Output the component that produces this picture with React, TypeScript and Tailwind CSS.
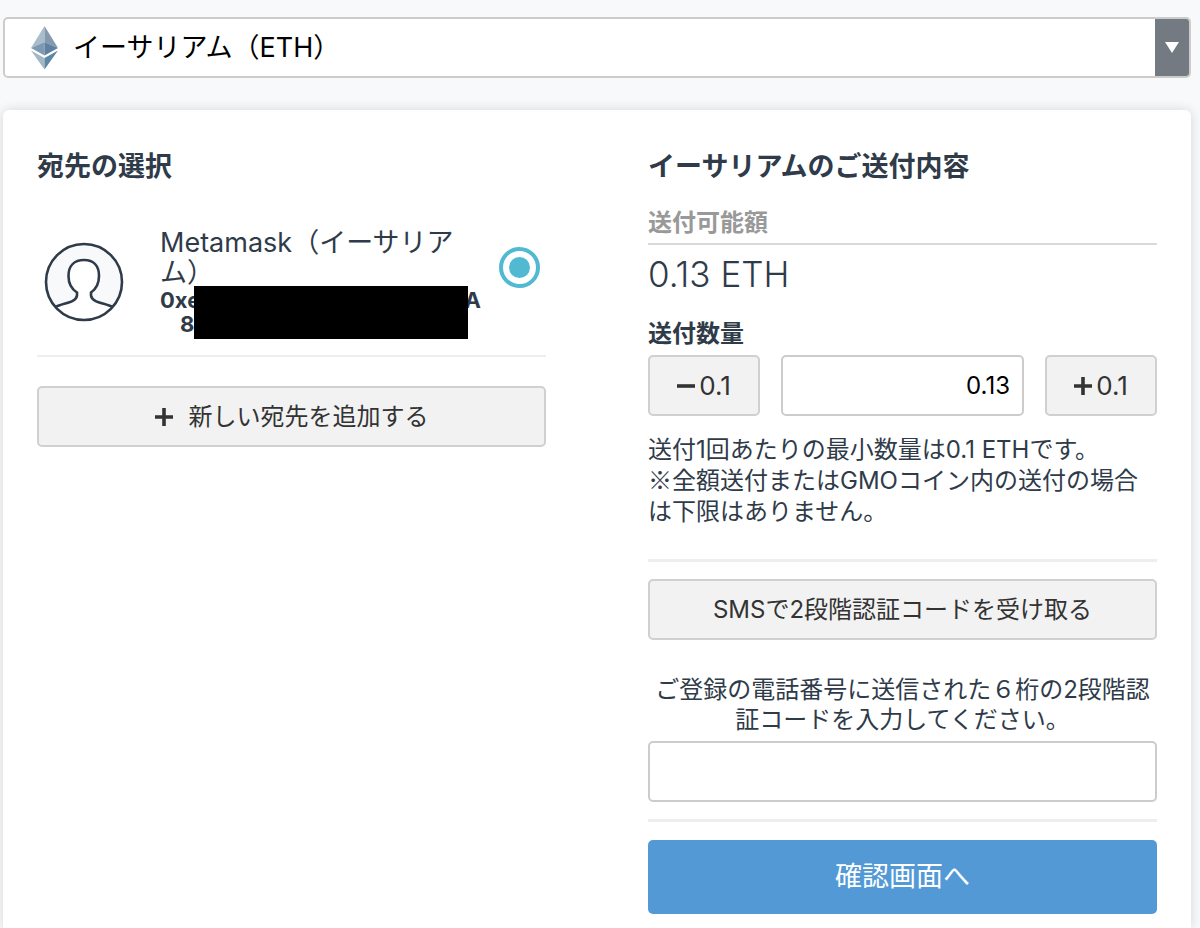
import { useState } from "react";

const GRAY_BTN =
  "flex h-[61px] items-center justify-center rounded-[5px] border-2 border-[#d0d0d0] bg-[#f2f2f2] text-[#333]";
const TEXT_INPUT =
  "h-[61px] w-full min-w-0 rounded-[5px] border-2 border-[#ccc] bg-white px-3 text-[24px] text-black outline-none";

function EthIcon() {
  return (
    <svg className="h-[43px] w-[27px] shrink-0" viewBox="0 0 27 43" aria-hidden="true">
      <path d="M13.5 0L0 22L13.5 16Z" fill="#a9bcc9" />
      <path d="M13.5 0L27 22L13.5 16Z" fill="#8299ae" />
      <path d="M0 22L13.5 16V29.500Z" fill="#7e99b2" />
      <path d="M27 22L13.5 16V29.500Z" fill="#5f819f" />
      <path d="M0 24.500L13.5 32V43.500Z" fill="#a3b7c5" />
      <path d="M27 24.500L13.5 32V43.500Z" fill="#5d87a3" />
    </svg>
  );
}

function AvatarIcon() {
  return (
    <svg className="size-20 shrink-0" viewBox="0 0 80 80" fill="none" stroke="#2f3b49" strokeWidth="2.6" aria-hidden="true">
      <circle cx="40" cy="40" r="38" fill="#f8f9fb" stroke="none" />
      <path
        d="M11.500 65C19 61 32 61 33 53.500V50.500C27.500 47 24.500 41 24.500 34C24.500 23.500 30.500 18 40 18C49.500 18 55 23.500 55 34C55 41 52 47 47 50.500V53.500C48 61 61 61 68.500 65C60 75 50 78 40 78C30 78 20 75 11.500 65Z"
        fill="#fff"
        stroke="none"
      />
      <path d="M11.500 65C19 61 32 61 33 53.500V50.500C27.500 47 24.500 41 24.500 34C24.500 23.500 30.500 18 40 18C49.500 18 55 23.500 55 34C55 41 52 47 47 50.500V53.500C48 61 61 61 68.500 65" />
      <circle cx="40" cy="40" r="38" />
    </svg>
  );
}

function PlusIcon() {
  return (
    <svg className="size-[18px] shrink-0" viewBox="0 0 18 18" aria-hidden="true">
      <path d="M9 0V18M0 9H18" stroke="#333" strokeWidth="3.600" />
    </svg>
  );
}

function MinusIcon() {
  return (
    <svg className="size-[18px] shrink-0" viewBox="0 0 18 18" aria-hidden="true">
      <path d="M0 9H18" stroke="#333" strokeWidth="3.600" />
    </svg>
  );
}

function CurrencySelect() {
  return (
    <div className="flex h-[61px] items-stretch overflow-hidden rounded-[5px] border-2 border-[#ccc] bg-white">
      <div className="flex items-center pl-[26px]">
        <EthIcon />
      </div>
      <select
        aria-label="銘柄"
        defaultValue="eth"
        className="min-w-0 flex-1 appearance-none bg-transparent pt-[2px] pl-[15px] text-[27px] text-black outline-none"
      >
        <option value="eth">イーサリアム（ETH）</option>
        <option value="btc">ビットコイン（BTC）</option>
      </select>
      <div className="pointer-events-none flex w-[34px] items-center justify-center bg-[#737a82]">
        <svg className="h-[11px] w-[14px]" viewBox="0 0 14 11" aria-hidden="true">
          <path d="M0 0H14L7 11Z" fill="#fff" />
        </svg>
      </div>
    </div>
  );
}

function Destination() {
  return (
    <section>
      <h2 className="text-[27px] leading-10 font-bold">宛先の選択</h2>

      <label className="mt-[25px] flex items-center border-b-2 border-[#eee] pt-4 pr-[6px] pb-[19px] pl-[7px]">
        <AvatarIcon />
        <span className="relative ml-9 flex min-w-0 flex-1 flex-col">
          <span className="text-[27px] leading-[30px]">Metamask（イーサリアム）</span>
          <span className="flex justify-between text-[22px] leading-6 font-bold">
            <span>0xe</span>
            <span>A</span>
          </span>
          <span className="pl-5 text-[22px] leading-6 font-bold">8</span>
          {/* address mask */}
          <span className="absolute right-[13px] -bottom-[3px] left-[34px] h-[53px] bg-black" />
        </span>
        <input
          type="radio"
          name="destination"
          defaultChecked
          className="mt-[19px] ml-[18px] size-[41px] shrink-0 appearance-none self-start rounded-full border-4 border-[#51b9d2] bg-white bg-clip-content p-[6px] checked:bg-[#51b9d2]"
        />
      </label>

      <button type="button" className={`${GRAY_BTN} mt-[29px] w-full gap-4 text-[24px]`}>
        <PlusIcon />
        新しい宛先を追加する
      </button>
    </section>
  );
}

function SendDetails() {
  const [amount, setAmount] = useState(0.13);

  const step = (diff: number) => setAmount((v) => Math.max(0, Math.round((v + diff) * 100) / 100));

  return (
    <section>
      <h2 className="text-[27px] leading-10 font-bold">イーサリアムのご送付内容</h2>

      <h3 className="mt-5 border-b-2 border-[#d9d9d9] pb-1 text-[24px] leading-8 font-bold text-[#999]">送付可能額</h3>
      <p className="mt-[9px] text-[35px] leading-10 font-light">0.13 ETH</p>

      <label htmlFor="amount" className="mt-[25px] block text-[24px] leading-[30px] font-bold">
        送付数量
      </label>
      <div className="mt-[6px] flex gap-[21px]">
        <button type="button" onClick={() => step(-0.1)} className={`${GRAY_BTN} w-28 shrink-0 gap-1 text-[26px]`}>
          <MinusIcon />
          0.1
        </button>
        <input
          id="amount"
          type="text"
          inputMode="decimal"
          value={amount}
          onChange={(e) => setAmount(Number(e.target.value) || 0)}
          className={`${TEXT_INPUT} text-right`}
        />
        <button type="button" onClick={() => step(0.1)} className={`${GRAY_BTN} w-28 shrink-0 gap-1 text-[26px]`}>
          <PlusIcon />
          0.1
        </button>
      </div>
      <p className="mt-[18px] text-[24px] leading-[31px]">
        送付1回あたりの最小数量は0.1 ETHです。
        <br />
        <span className="font-['Noto_Sans_CJK_JP',sans-serif] leading-none">※</span>
        <span>全額送付またはGMOコイン内の送付の場合</span>
        <br />
        <span>は下限はありません。</span>
      </p>

      <hr className="mt-8 border-t-[3px] border-[#eee]" />
      <button type="button" className={`${GRAY_BTN} mt-[17px] w-full text-[24px]`}>
        SMSで2段階認証コードを受け取る
      </button>

      <label htmlFor="code" className="mt-[35px] block text-center text-[24px] leading-[30px]">
        ご登録の電話番号に送信された６桁の2段階認証コードを入力してください。
      </label>
      <input id="code" type="text" inputMode="numeric" maxLength={6} className={`${TEXT_INPUT} mt-[6px]`} />

      <hr className="mt-[17px] border-t-[3px] border-[#eee]" />
      <button
        type="submit"
        className="mt-[18px] flex h-[74px] w-full items-center justify-center rounded-[5px] bg-[#5299d6] text-[27px] text-white"
      >
        確認画面へ
      </button>
    </section>
  );
}

export default function App() {
  return (
    <div className="flex min-h-screen flex-col bg-[#f8f9fb] pt-[17px] pr-[9px] pl-[3px] font-['Inter','Noto_Sans_CJK_JP',sans-serif] text-[#2f3b49]">
      <CurrencySelect />
      <form
        onSubmit={(e) => e.preventDefault()}
        className="mt-8 grid flex-1 grid-cols-2 gap-[102px] rounded-t-[6px] bg-white px-[34px] pt-[37px] pb-3 shadow-[0_0_12px_rgba(0,0,0,0.14)]"
      >
        <Destination />
        <SendDetails />
      </form>
    </div>
  );
}
